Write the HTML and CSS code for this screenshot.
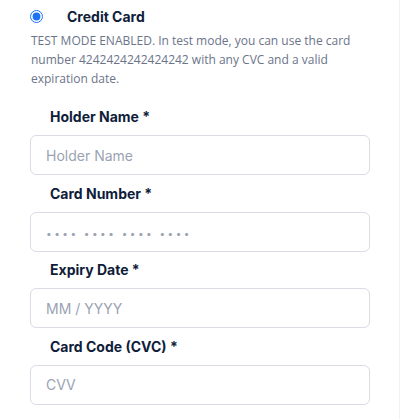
FILE: index.html
```html
<!DOCTYPE html>
<html>
<head>
<meta charset="utf-8">
<link rel="stylesheet" href="styles.css">
</head>
<body>
<div class="panel">
  <label class="method">
    <input type="radio" name="pm" checked class="radio">
    <span class="method-title">Credit Card</span>
  </label>
  <p class="desc">TEST MODE ENABLED. In test mode, you can use the card number 4242424242424242 with any CVC and a valid expiration date.</p>
  <div class="fields">
    <div class="field">
      <label class="field-label">Holder Name *</label>
      <input class="input" type="text" placeholder="Holder Name">
    </div>
    <div class="field">
      <label class="field-label">Card Number *</label>
      <input class="input dots" type="text" placeholder="•••• •••• •••• ••••">
    </div>
    <div class="field">
      <label class="field-label">Expiry Date *</label>
      <input class="input" type="text" placeholder="MM / YYYY">
    </div>
    <div class="field">
      <label class="field-label">Card Code (CVC) *</label>
      <input class="input" type="text" placeholder="CVV">
    </div>
  </div>
</div>
</body>
</html>
```
FILE: styles.css
```css
html, body {
  margin: 0;
  padding: 0;
  background: #ffffff;
}
body {
  font-family: "Inter", "Liberation Sans", sans-serif;
}
.panel {
  width: 400px;
  height: 419px;
  border-right: 1px solid #f2f2f4;
  box-sizing: border-box;
  padding: 8px 31px 0 30px;
}
.method {
  display: flex;
  align-items: center;
  height: 17px;
}
.radio {
  width: 13px;
  height: 13px;
  margin: 0;
  accent-color: #1a73f5;
}
.method-title {
  margin-left: 24px;
  font-size: 14px;
  font-weight: 700;
  color: #0f1d3a;
}
.desc {
  margin: 6px 0 0 1px;
  font-family: "Open Sans", "Noto Sans", sans-serif;
  font-size: 12px;
  line-height: 19px;
  color: #6b7489;
}
.fields {
  display: flex;
  flex-direction: column;
  margin-top: 20px;
}
.field {
  display: flex;
  flex-direction: column;
}
.field-label {
  font-size: 14px;
  font-weight: 700;
  color: #0f1d3a;
  padding-left: 20px;
  height: 18px;
  line-height: 18px;
  margin-bottom: 9px;
}
.input {
  width: 340px;
  height: 40px;
  box-sizing: border-box;
  border: 1px solid #d9dce4;
  border-radius: 6px;
  padding: 0 15px;
  font-family: "Inter", "Liberation Sans", sans-serif;
  font-size: 14px;
  margin: 0 0 9.5px 0;
  outline: none;
}
.input::placeholder {
  color: #9ba3b3;
}
.dots::placeholder {
  font-size: 10px;
  letter-spacing: 2.5px;
}
```
